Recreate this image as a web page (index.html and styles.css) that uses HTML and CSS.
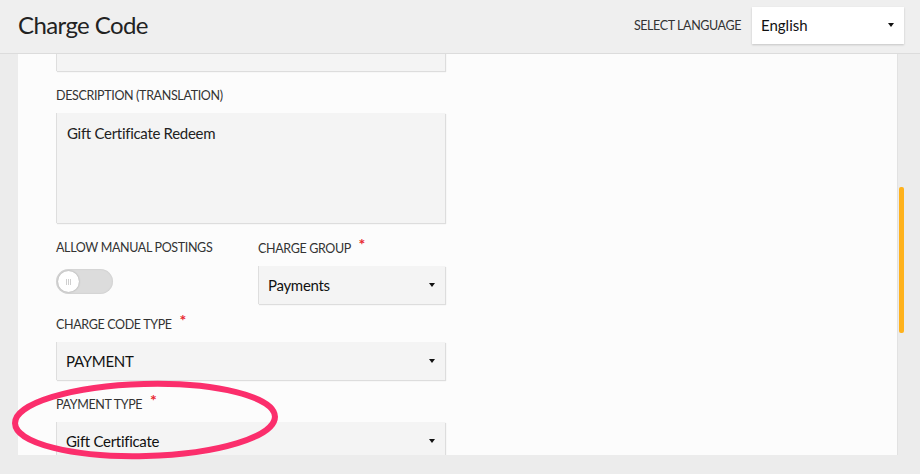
FILE: index.html
```html
<!DOCTYPE html>
<html lang="en">
<head>
<meta charset="utf-8">
<title>Charge Code</title>
<link rel="stylesheet" href="styles.css">
</head>
<body>
<header class="topbar">
  <h1 class="title">Charge Code</h1>
  <div class="lang">
    <span class="lang-label">SELECT LANGUAGE</span>
    <div class="lang-select"><span>English</span><i class="caret"></i></div>
  </div>
</header>
<main class="panel">
  <div class="form">
    <div class="field scrolled">
      <div class="input"></div>
    </div>
    <div class="field">
      <div class="label">DESCRIPTION (TRANSLATION)</div>
      <div class="textarea">Gift Certificate Redeem</div>
    </div>
    <div class="row">
      <div class="field col-left">
        <div class="label">ALLOW MANUAL POSTINGS</div>
        <div class="toggle"><span class="knob"><i></i><i></i><i></i></span></div>
      </div>
      <div class="field col-right">
        <div class="label">CHARGE GROUP <span class="req">*</span></div>
        <div class="select"><span>Payments</span><i class="caret"></i></div>
      </div>
    </div>
    <div class="field">
      <div class="label">CHARGE CODE TYPE <span class="req">*</span></div>
      <div class="select"><span>PAYMENT</span><i class="caret"></i></div>
    </div>
    <div class="field">
      <div class="label">PAYMENT TYPE <span class="req">*</span></div>
      <div class="select"><span>Gift Certificate</span><i class="caret"></i></div>
    </div>
  </div>
</main>
<div class="scrollbar"></div>
<svg class="highlight" width="300" height="100" viewBox="0 0 300 100" aria-hidden="true">
  <ellipse cx="145" cy="44" rx="130" ry="36" fill="none" stroke="#fb2e6c" stroke-width="6" transform="rotate(-1.5 145 44)"/>
</svg>
</body>
</html>
```

FILE: styles.css
```css
* { box-sizing: border-box; }
html, body { margin: 0; height: 100%; }
body {
  background: #ececec;
  font-family: "Lato", "Open Sans", sans-serif;
  color: #222;
  overflow: hidden;
  position: relative;
}
.topbar {
  height: 54px;
  border-bottom: 1px solid #dcdcdc;
  display: flex;
  align-items: center;
  justify-content: space-between;
  padding: 0 16px 0 18px;
  background: #efefef;
}
.title {
  margin: 0;
  font-size: 24px;
  font-weight: 400;
  color: #222;
  letter-spacing: -0.6px;
  padding-bottom: 4px;
}
.lang { display: flex; align-items: center; gap: 11px; padding-bottom: 3px; }
.lang-label { font-size: 12.5px; color: #333; letter-spacing: -0.4px; }
.lang-select {
  width: 152px;
  height: 37px;
  background: #fff;
  box-shadow: 0 1px 2px rgba(0,0,0,0.18);
  display: flex;
  align-items: center;
  justify-content: space-between;
  padding: 0 10px 0 9px;
  font-size: 15px;
  color: #111;
}
.caret {
  display: block;
  width: 0; height: 0;
  border-left: 3px solid transparent;
  border-right: 3px solid transparent;
  border-top: 4px solid #111;
}
.panel {
  position: relative;
  margin: 0 22px 0 18px;
  height: 401px;
  background: #fcfcfc;
  border-right: 1px solid #e2e2e2;
  overflow: hidden;
}
.form {
  width: 427px;
  padding-left: 38px;
  margin-top: -21px;
}
.field { margin-bottom: 17px; }
.label {
  font-size: 12.5px;
  line-height: 16px;
  color: #333;
  margin-bottom: 9px;
  letter-spacing: -0.35px;
}
.req {
  color: #e8272e;
  margin-left: 5px;
  font-size: 16px;
  font-weight: 700;
  position: relative;
  top: -3px;
  line-height: 10px;
}
.input, .textarea, .select {
  background: #f4f4f4;
  border-left: 1px solid #dedede;
  box-shadow: 1px 1px 1px rgba(0,0,0,0.12);
}
.input { height: 38px; }
.textarea {
  height: 110px;
  padding: 10px 10px;
  font-size: 15px;
  line-height: 20px;
  letter-spacing: -0.3px;
}
.select {
  height: 38px;
  display: flex;
  align-items: center;
  justify-content: space-between;
  padding: 0 10px 0 9px;
  font-size: 15px;
  color: #111;
  letter-spacing: -0.3px;
}
.row { display: flex; margin-bottom: 13px; }
.row .field { margin-bottom: 0; }
.col-left { width: 202px; }
.col-right { flex: 1; }
.col-left .label { margin-bottom: 13px; }
.col-right .label { margin-bottom: 10px; position: relative; top: 1px; }
.toggle {
  width: 57px;
  height: 25px;
  border-radius: 13px;
  background: #dcdcdc;
  box-shadow: inset 0 0 2px rgba(0,0,0,0.12);
  padding: 2px;
  display: flex;
  align-items: center;
}
.knob {
  width: 21px;
  height: 21px;
  border-radius: 50%;
  background: #fff;
  box-shadow: 0 0 2px rgba(0,0,0,0.3);
  display: flex;
  align-items: center;
  justify-content: center;
  gap: 1px;
}
.knob i { display: block; width: 1px; height: 6px; background: #cfcfcf; }
.scrollbar {
  position: absolute;
  left: 899px;
  top: 187px;
  width: 5px;
  height: 146px;
  border-radius: 2px;
  background: #ffb21c;
}
.highlight {
  position: absolute;
  left: 0;
  top: 376px;
}
```
